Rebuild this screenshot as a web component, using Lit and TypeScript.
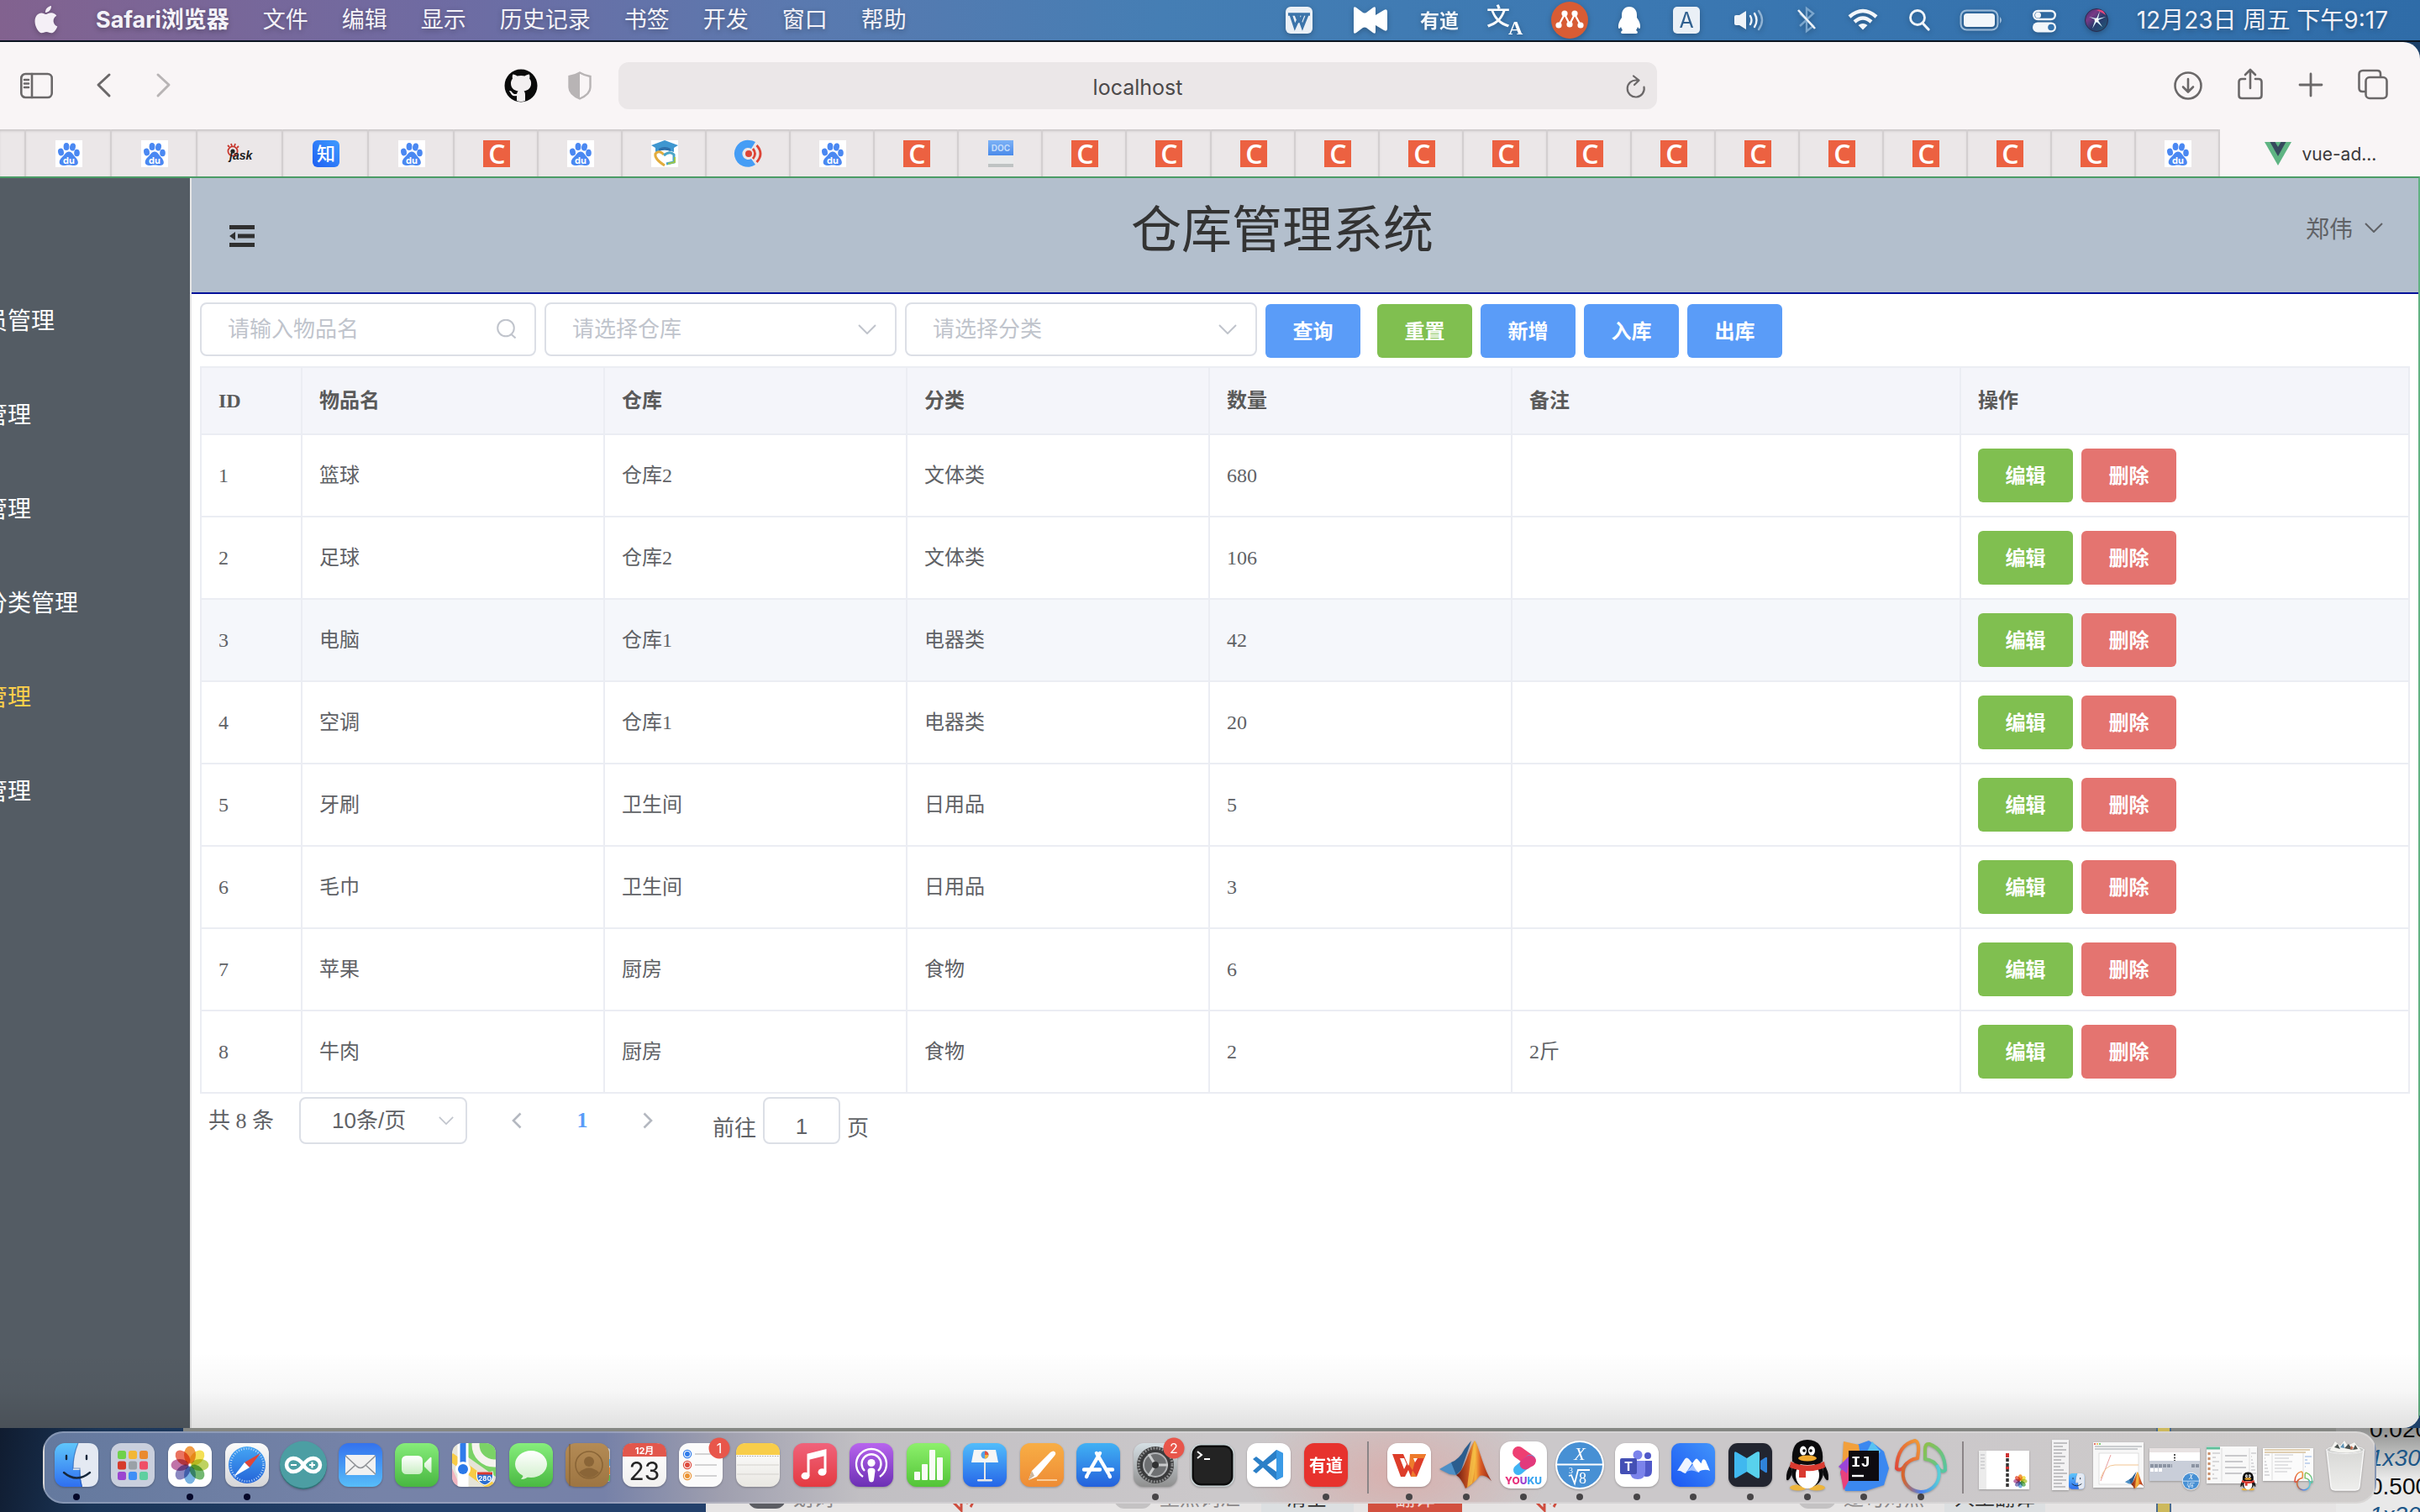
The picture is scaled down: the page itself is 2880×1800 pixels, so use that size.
import { LitElement, html, svg, css } from "lit";
import { customElement } from "lit/decorators.js";
import { classMap } from "lit/directives/class-map.js";

/* ------------------------------------------------------------------ */
/* Menu bar                                                            */
/* ------------------------------------------------------------------ */

const menus = ["文件", "编辑", "显示", "历史记录", "书签", "开发", "窗口", "帮助"];

/** Menu bar extras: [width, drawing], each drawn on a canvas 48 high. */
const extras: [number, unknown][] = [
  [48, svg`<rect x="8" y="8" width="32" height="32" rx="6" fill="#eaf0f6"/>
    <path d="M11 17h14M24 17h13M14 17l5 15 5-11 4 11 6-15M20 17l4 10M29 17l-3 8" fill="none" stroke="#3b74aa" stroke-width="3.4"/>`],
  [52, svg`<path d="M7 10q0-3 3-1l8 6q2 1 4 0l8-6q3-2 3 1v10l10-5q3-1 3 2v14q0 3-3 2l-10-5v10q0 3-3 1l-8-6q-2-1-4 0l-8 6q-3 2-3-1z" fill="#fff"/><path d="M33 18l10-6q4-2 4 2v20q0 4-4 2l-10-6z" fill="#fff"/>`],
  [47, svg`<text x="23" y="33" text-anchor="middle" font-size="23" font-weight="700" fill="#f2f6fa">有道</text>`],
  [41, svg`<text x="-2" y="30" font-size="28" font-weight="500" fill="#fff">文</text>
    <text x="24" y="41" font-size="24" font-weight="700" class="serif" fill="#fff">A</text>`],
  [44, svg`<circle cx="22" cy="24" r="22" fill="#d85c34"/>
    <path d="M9 30l7-13 6 12 6-12 7 13" fill="none" stroke="#fff" stroke-width="2.2"/>
    <g fill="#fff"><circle cx="9" cy="30" r="3.6"/><circle cx="16" cy="16" r="3.6"/><circle cx="22" cy="29" r="3.6"/><circle cx="28" cy="16" r="3.6"/><circle cx="35" cy="30" r="3.6"/></g>`],
  [30, svg`<path d="M15 8c-6 0-9 4.500-9 10v3c-3 4-4.500 8-4 12 .6 2 2 1 3-1 .6 2 1.500 3 2 4-2 1-3 4 0 4h16c3 0 2-3 0-4 .6-1 1.500-2 2-4 1 2 2.400 3 3 1 .5-4-1-8-4-12v-3c0-5.500-3-10-9-10z" fill="#fff"/>`],
  [39, svg`<rect x="3" y="8" width="32" height="32" rx="5" fill="#eaf0f6"/>
    <text x="19" y="33" text-anchor="middle" font-size="25" fill="#30608f">A</text>`],
  [41, svg`<path d="M3 20q0-2 2-2h4l8-5v22l-8-5H5q-2 0-2-2z" fill="#eef3f8"/>
    <g fill="none" stroke-width="2.400" stroke-linecap="round"><path d="M22 19q3 5 0 10" stroke="#eef3f8"/><path d="M27 16q5 8 0 16" stroke="#eef3f8"/><path d="M32 13q8 11 0 22" stroke="#8fb2d3"/></g>`],
  [28, svg`<path d="M6 16l16 15-8 6V10l8 6L6 31" fill="none" stroke="#7ba6cd" stroke-width="2.400"/>
    <path d="M4 12l20 22" stroke="#eef3f8" stroke-width="2.600"/>`],
  [38, svg`<g fill="none" stroke="#f2f6fa" stroke-width="4.400"><path d="M3 20q16-14 32 0"/><path d="M9 26q10-9 20 0"/></g>
    <path d="M13.500 30q5.500-4 11 0l-5.500 5.500z" fill="#f2f6fa"/>`],
  [28, svg`<circle cx="12" cy="21" r="8.500" fill="none" stroke="#f2f6fa" stroke-width="2.800"/><path d="M18 27.500l7 7.500" stroke="#f2f6fa" stroke-width="3.200" stroke-linecap="round"/>`],
  [53, svg`<rect x="1.500" y="12.500" width="44" height="23" rx="7" fill="none" stroke="#9dbcd9" stroke-width="2"/>
    <rect x="5" y="16" width="37" height="16" rx="4" fill="#f2f6fa"/><path d="M48 20q4 4 0 8z" fill="#9dbcd9"/>`],
  [28, svg`<rect x="1.200" y="13" width="25.600" height="10" rx="5" fill="none" stroke="#f2f6fa" stroke-width="2.400"/><circle cx="6.500" cy="18" r="3.500" fill="#f2f6fa"/>
    <rect x="0" y="26.500" width="28" height="12" rx="6" fill="#f2f6fa"/><circle cx="22" cy="32.500" r="3.800" fill="#3573ad"/>`],
  [28, svg`<defs><linearGradient id="siri" x1="0" y1="0" x2="1" y2="1"><stop offset="0" stop-color="#3a2a6b"/><stop offset=".3" stop-color="#7a3a86"/><stop offset=".55" stop-color="#2a3a6d"/><stop offset="1" stop-color="#1d5f78"/></linearGradient></defs>
    <circle cx="14" cy="24" r="13.500" fill="url(#siri)" stroke="#2a2b4c"/><path d="M14 24l-9-4 9 2 4-9-2 9 9-2-9 4 5 8-7-6-5 8 3-9z" fill="#d9f6fb"/><circle cx="14" cy="24" r="2.400" fill="#fff"/><path d="M14 12q8-2 11 6-6-4-11-6z" fill="#e0487e"/>`],
];

@customElement("menu-bar")
export class MenuBar extends LitElement {
  static styles = css`
    :host {
      display: flex;
      align-items: center;
      justify-content: space-between;
      height: 48px;
      padding: 0 38px 0 36px;
      border-bottom: 2px solid #0b1420;
      background: linear-gradient(90deg, #82628f 0%, #6f6ba2 18%, #5a79af 33%, #457eb4 48%, #3b78b2 68%, #2f6ca8 100%);
      color: #fff;
      font-family: Inter, "Noto Sans CJK SC", sans-serif;
      font-size: 27px;
    }
    .left, .right { display: flex; align-items: center; }
    .left { gap: 40px; }
    .right { gap: 34px; }
    button {
      margin: 0;
      padding: 0;
      border: 0;
      background: none;
      color: #f4f2f8;
      font: inherit;
      line-height: 46px;
      text-shadow: 0 2px 6px rgba(0, 0, 0, 0.3);
    }
    .app { font-weight: 700; }
    .apple { display: flex; }
    svg { display: block; overflow: visible; filter: drop-shadow(0 2px 3px rgba(0, 0, 0, 0.25)); }
    .serif { font-family: "Liberation Serif", serif; }
    .clock { font-size: 28px; }
  `;
  render() {
    return html`
      <nav class="left" aria-label="菜单">
        <button class="apple" aria-label="Apple">
          <svg width="38" height="46" viewBox="0 0 38 46">
            <path fill="#f4eff6" d="M25 6c.3 4-3 8-7 8-.4-4 3-7.500 7-8zM18.500 16c1.700 0 3.500-1.700 6.500-1.700 2.500 0 5 1.400 6.300 3.500-5.500 3-4.600 10.500 1 12.700-1.500 4-4.300 7.800-7.300 7.800-2.300 0-3-1.300-5.700-1.300s-3.600 1.300-5.700 1.300C10 38.300 5.500 30.500 5.500 24.500c0-6.500 4-10 7.800-10 2.400 0 3.900 1.500 5.200 1.500z"/>
          </svg>
        </button>
        <button class="app">Safari浏览器</button>
        ${menus.map((m) => html`<button>${m}</button>`)}
      </nav>
      <div class="right">
        ${extras.map(([w, art]) => html`<svg width=${w} height="48" viewBox="0 0 ${w} 48" aria-hidden="true">${art}</svg>`)}
        <button class="clock">12月23日 周五 下午9:17</button>
      </div>
    `;
  }
}

/* ------------------------------------------------------------------ */
/* Browser toolbar and tabs                                            */
/* ------------------------------------------------------------------ */

const favicons: Record<string, unknown> = {
  baidu: svg`<rect width="32" height="32" fill="#fff"/>
    <g fill="#4a88f2"><ellipse cx="6.500" cy="14" rx="3.400" ry="4.400" transform="rotate(-12 6.500 14)"/><ellipse cx="13" cy="7.500" rx="3.400" ry="4.600"/><ellipse cx="20.500" cy="8" rx="3.400" ry="4.600" transform="rotate(12 20.500 8)"/><ellipse cx="25.500" cy="15" rx="3.300" ry="4.300"/>
    <path d="M16 13.500c4 0 5 4 8 7s5 9-1 9.500c-3 .3-4-.6-7-.6s-4 .9-7 .6c-6-.5-5-6.500-1.500-9.500s4.500-7 8.500-7z"/></g>
    <text x="16" y="27.500" text-anchor="middle" font-size="11" font-weight="700" fill="#fff">du</text>`,
  c: svg`<rect width="32" height="32" fill="#ec6141"/><text x="16.500" y="27.500" text-anchor="middle" font-size="32" font-weight="600" class="round" fill="#fff">C</text>`,
  ask: svg`<g fill="none" stroke="#c8392f" stroke-width="1.800"><circle cx="7" cy="13" r="5.600"/><path d="M3 8L1 6M6 7L5 4M9 7l1-3M12 9l2-2"/></g><circle cx="7" cy="13" r="2.600" fill="#222"/>
    <text x="3" y="23" font-size="14" font-weight="700" font-style="italic" fill="#1d1d1d" class="cond">jask</text>`,
  zhi: svg`<defs><linearGradient id="zhi" x1="1" y1="0" x2="0" y2="1"><stop offset="0" stop-color="#3f9bff"/><stop offset="1" stop-color="#1f5ff2"/></linearGradient></defs>
    <rect width="32" height="32" rx="6" fill="url(#zhi)"/><text x="16" y="24" text-anchor="middle" font-size="22" font-weight="500" fill="#fff">知</text>`,
  grad: svg`<rect width="32" height="32" fill="#fff"/><path d="M16 0l16 6-5 3v5q-11-5-22 0V9L0 6z" fill="#3f97d0"/><path d="M9 10q7-4 14 0v3q-7-3-14 0z" fill="#2d6faa"/>
    <path d="M16 30C8 25 4 20 5 16q4-5 10 1" fill="none" stroke="#e3ac3d" stroke-width="3"/><path d="M15 18q7-6 12-1v9l-9 2" fill="none" stroke="#4aa5c8" stroke-width="3"/><path d="M20 28l8-2v-6" fill="none" stroke="#9cc74b" stroke-width="2"/>`,
  radio: svg`<path d="M17 0a16 16 0 1 0 7 29l-5-7a7 7 0 1 1 0-12l5-8a16 16 0 0 0-7-2z" fill="#459df5"/><circle cx="16" cy="16" r="4" fill="#dd4436"/>
    <g fill="none" stroke="#dd4436" stroke-width="2.800"><path d="M21 10q5 6 0 12"/><path d="M25.500 6q9 10 0 20"/></g>`,
  doc: svg`<defs><linearGradient id="doc" x1="0" y1="0" x2="0" y2="1"><stop offset="0" stop-color="#7db2f6"/><stop offset="1" stop-color="#4a8bea"/></linearGradient></defs>
    <rect x="1" width="30" height="32" fill="#e9eaea"/><rect x="1" y="28" width="30" height="4" fill="#bfc3c3"/><rect x="1" width="30" height="18" fill="url(#doc)"/>
    <text x="16" y="13" text-anchor="middle" font-size="10" font-weight="700" fill="#c3dcfa">DOC</text>`,
  vue: svg`<path d="M0 2h32L16 30z" fill="#5fb483"/><path d="M6.500 2h19L16 19z" fill="#36495d"/><path d="M12.500 2h7L16 8z" fill="#5fb483"/>`,
};

const tabs = [
  "baidu", "baidu", "ask", "zhi", "baidu", "c", "baidu", "grad", "radio", "baidu", "c", "doc",
  ...Array(13).fill("c"), "baidu",
];

@customElement("browser-chrome")
export class BrowserChrome extends LitElement {
  static styles = css`
    :host {
      display: block;
      background: #f9f5f6;
      font-family: Inter, "Noto Sans CJK SC", sans-serif;
    }
    .toolbar {
      display: flex;
      align-items: center;
      height: 104px;
      padding: 0 38px 0 24px;
    }
    .start { flex: 712 1 0; min-width: 0; display: flex; align-items: center; }
    .end { flex: 870 1 0; min-width: 0; display: flex; align-items: center; justify-content: flex-end; gap: 40px; }
    .nav { display: flex; align-items: center; flex: 1; gap: 52px; }
    .extensions { display: flex; align-items: center; gap: 36px; margin-right: 32px; }
    .address {
      flex: 1236 1 0;
      min-width: 0;
      display: flex;
      align-items: center;
      height: 56px;
      border-radius: 12px;
      background: #ebe7e8;
    }
    input {
      flex: 1;
      min-width: 0;
      border: 0;
      padding: 4px 0 0 38px;
      background: none;
      color: #4b494a;
      font: 25px Inter, sans-serif;
      text-align: center;
      outline: 0;
    }
    button { display: flex; padding: 0; border: 0; background: none; color: #6b6869; }
    .address button { margin-right: 12px; }
    .faded { color: #b8b4b5; }
    svg { display: block; overflow: visible; }
    .tabs {
      display: grid;
      grid-template-columns: 31fr repeat(5, 102fr) repeat(21, 100fr) 238fr;
      height: 56px;
    }
    .tab {
      display: flex;
      align-items: center;
      justify-content: center;
      min-width: 0;
      border-right: 2px solid #d3cfd0;
      background: #ebe7e8;
      box-shadow: inset 0 3px 3px -1px #c9c5c6;
      padding: 2px 0 0 2px;
    }
    .current {
      border: 0;
      gap: 12px;
      background: none;
      box-shadow: none;
      color: #3b393a;
      font-size: 21px;
    }
    .round { font-family: "Open Sans", sans-serif; }
    .cond { font-family: "Liberation Sans", sans-serif; }
  `;
  render() {
    return html`
      <div class="toolbar">
        <div class="start">
          <div class="nav">
            <button aria-label="边栏">
              <svg width="39" height="32" viewBox="0 0 39 32" fill="none" stroke="currentColor" stroke-width="2.600">
                <rect x="1.300" y="2" width="36.400" height="28" rx="5"/><path d="M14 2v28M5 9h5M5 13.500h5M5 18h5" stroke-linecap="round"/>
              </svg>
            </button>
            <button aria-label="后退">
              <svg width="18" height="30" viewBox="0 0 18 30" fill="none" stroke="currentColor" stroke-width="3"><path d="M15 2L2 14l13 13" stroke-linecap="round" stroke-linejoin="round"/></svg>
            </button>
            <button class="faded" aria-label="前进">
              <svg width="18" height="30" viewBox="0 0 18 30" fill="none" stroke="currentColor" stroke-width="3"><path d="M3 2l13 12L3 27" stroke-linecap="round" stroke-linejoin="round"/></svg>
            </button>
          </div>
          <div class="extensions">
            <button aria-label="GitHub">
              <svg width="40" height="40" viewBox="0 0 40 40">
                <circle cx="20" cy="20" r="19.500" fill="#0a0a0a"/>
                <path fill="#f2eff0" d="M15 38v-6c-5 1.200-6.500-1.500-7.500-3.500-.7-1.200-2-2-1-2.400 2.200-.4 3.400 3.400 5.500 3.800 1.300.3 2.500 0 3.200-.5.2-1.300.8-2.200 1.500-2.800-6-1-8.700-4.200-8.700-9.500 0-2.300.8-4.200 2-5.600-.5-1.800-.3-3.800.4-5 2 0 3.800 1 5 2 3-.8 6.400-.8 9.200 0 1.400-1 3.200-2 5.200-2 .7 1.300.9 3.200.3 5 1.300 1.500 2 3.300 2 5.600 0 5.300-2.800 8.500-8.600 9.500 1 .8 1.500 2.500 1.500 4.500v7q-5 1.800-10 0z"/>
              </svg>
            </button>
            <button class="faded" aria-label="隐私">
              <svg width="28" height="34" viewBox="0 0 28 34"><path d="M14 1.500Q20 5 26.500 6v13q0 8-12.500 13.500Q1.500 27 1.500 19V6Q8 5 14 1.500z" fill="none" stroke="currentColor" stroke-width="2.400"/><path d="M14 1.500v31Q1.500 27 1.500 19V6Q8 5 14 1.500z" fill="currentColor"/></svg>
            </button>
          </div>
        </div>
        <div class="address">
          <input type="text" aria-label="地址" .value=${"localhost"} />
          <button aria-label="重新载入">
            <svg width="26" height="30" viewBox="0 0 26 30" fill="none" stroke="currentColor" stroke-width="2.200" stroke-linecap="round" stroke-linejoin="round"><path d="M22.500 16.500A10 10 0 1 1 14 8.600M10 3.500l6.500 5.200L11 14"/></svg>
          </button>
        </div>
        <div class="end">
          <button aria-label="下载">
            <svg width="36" height="40" viewBox="0 0 36 40" fill="none" stroke="currentColor" stroke-width="2.600" stroke-linecap="round" stroke-linejoin="round"><circle cx="18" cy="20" r="15.500"/><path d="M18 12v15M12 21.500l6 6 6-6"/></svg>
          </button>
          <button aria-label="共享">
            <svg width="32" height="40" viewBox="0 0 32 40" fill="none" stroke="currentColor" stroke-width="2.600" stroke-linecap="round" stroke-linejoin="round"><path d="M10 12H6q-3.500 0-3.500 3.500v16Q2.500 35 6 35h20q3.500 0 3.500-3.500v-16Q29.500 12 26 12h-4M16 23V1M10 7l6-6 6 6"/></svg>
          </button>
          <button aria-label="新标签页">
            <svg width="32" height="40" viewBox="0 0 32 40" fill="none" stroke="currentColor" stroke-width="2.800" stroke-linecap="round"><path d="M16 6v26M3 19h26"/></svg>
          </button>
          <button aria-label="标签页概览">
            <svg width="36" height="40" viewBox="0 0 36 40" fill="none" stroke="currentColor" stroke-width="2.600" stroke-linejoin="round"><rect x="9.500" y="10" width="25" height="25" rx="4.500"/><path d="M9.500 27H5.500Q1.500 27 1.500 23V6.500q0-4.500 4.500-4.500H23q4 0 4 4v4"/></svg>
          </button>
        </div>
      </div>
      <div class="tabs">
        <div class="tab"></div>
        ${tabs.map((t) => html`<div class="tab"><svg width="32" height="32" viewBox="0 0 32 32">${favicons[t]}</svg></div>`)}
        <div class="tab current"><svg width="32" height="32" viewBox="0 0 32 32">${favicons.vue}</svg><span>vue-ad...</span></div>
      </div>
    `;
  }
}

/* ------------------------------------------------------------------ */
/* Warehouse page                                                      */
/* ------------------------------------------------------------------ */

const sections = [
  { label: "员管理" },
  { label: "管理" },
  { label: "管理" },
  { label: "分类管理" },
  { label: "管理", active: true },
  { label: "管理" },
];

const columns = ["ID", "物品名", "仓库", "分类", "数量", "备注", "操作"];

const goods = [
  [1, "篮球", "仓库2", "文体类", 680, ""],
  [2, "足球", "仓库2", "文体类", 106, ""],
  [3, "电脑", "仓库1", "电器类", 42, ""],
  [4, "空调", "仓库1", "电器类", 20, ""],
  [5, "牙刷", "卫生间", "日用品", 5, ""],
  [6, "毛巾", "卫生间", "日用品", 3, ""],
  [7, "苹果", "厨房", "食物", 6, ""],
  [8, "牛肉", "厨房", "食物", 2, "2斤"],
];
const hoveredId = 3;

const chevron = (w: number, h: number) => html`
  <svg class="mark" width=${w} height=${h} viewBox="0 0 22 12" fill="none" stroke="currentColor" stroke-width="2" aria-hidden="true"><path d="M1 1l10 10L21 1"/></svg>`;

@customElement("warehouse-page")
export class WarehousePage extends LitElement {
  static styles = css`
    :host {
      display: flex;
      border-top: 2px solid #4b9c66;
      border-right: 2px solid #62b283;
      background: #fff;
      color: #606266;
      font-family: "Liberation Serif", "Noto Sans CJK SC", serif;
      font-size: 24px;
    }
    button, input, select { margin: 0; box-sizing: border-box; }
    aside {
      flex: none;
      width: 226px;
      box-sizing: content-box;
      overflow: hidden;
      border-right: 2px solid #e6e6e6;
      background: #545c64;
      padding-top: 115px;
    }
    aside ul { margin: 0 0 0 -19px; padding: 0; list-style: none; }
    aside a {
      display: block;
      color: #fff;
      font-size: 28px;
      line-height: 112px;
      text-decoration: none;
      white-space: nowrap;
    }
    aside a.active { color: #ffd04b; }
    .content { flex: 1; min-width: 0; }
    header {
      display: flex;
      align-items: center;
      height: 136px;
      padding: 0 42px 0 40px;
      border-bottom: 2px solid #00109a;
      background: #b3bfcd;
    }
    header h1 {
      flex: 1;
      margin: 0;
      padding-bottom: 10px;
      color: #333;
      font-size: 60px;
      font-weight: 400;
      line-height: 80px;
      text-align: center;
    }
    .fold, .user { display: flex; align-items: center; padding: 0; border: 0; background: none; }
    .fold { width: 40px; padding-top: 2px; color: #303030; justify-content: center; }
    .user { gap: 14px; padding-bottom: 19px; color: #606266; font: inherit; font-size: 28px; }
    main { padding: 10px; }
    .filters { display: flex; gap: 10px; height: 66px; margin-bottom: 10px; align-items: flex-start; }
    .field { display: grid; align-items: center; width: 419px; height: 64px; color: #c0c4cc; }
    .field.keyword { width: 400px; }
    .field > * { grid-area: 1 / 1; }
    .field .mark { justify-self: end; margin-right: 24px; pointer-events: none; }
    .control {
      appearance: none;
      width: 100%;
      height: 100%;
      border: 2px solid #dcdfe6;
      border-radius: 8px;
      background: #fff;
      padding: 0 48px 0 31px;
      color: #c0c4cc;
      font: 26px "Liberation Sans", "Noto Sans CJK SC", sans-serif;
      outline: 0;
    }
    .control::placeholder { color: #c0c4cc; opacity: 1; }
    .btn {
      width: 113px;
      height: 64px;
      border: 0;
      border-radius: 6px;
      padding: 0 0 4px;
      background: #5a9cf8;
      color: #fff;
      font: 700 24px "Liberation Sans", "Noto Sans CJK SC", sans-serif;
    }
    .filters .btn { align-self: flex-end; }
    .btn.green { background: #80bf50; }
    .btn.red { background: #e47470; }
    .search { margin-right: 10px; }
    table {
      width: 100%;
      table-layout: fixed;
      border-collapse: separate;
      border-spacing: 0;
      border: solid #ebedf3;
      border-width: 2px 0 0 2px;
    }
    .c-id { width: 120px; }
    .c-mid { width: 360px; }
    th, td {
      box-sizing: border-box;
      height: 98px;
      padding: 0 20px;
      border: solid #ebedf3;
      border-width: 0 2px 2px 0;
      text-align: left;
      line-height: 32px;
    }
    th { height: 80px; background: #f4f5fa; color: #5a5a5a; font-weight: 700; }
    tr.hover td { background: #f5f7fb; }
    .ops { display: flex; gap: 10px; }
    .pager {
      display: flex;
      align-items: flex-start;
      margin-top: 4px;
      padding: 0 10px;
      font-size: 26px;
      line-height: 58px;
    }
    .field.size { width: 200px; height: 56px; margin: 0 20px 0 30px; }
    .size .control { padding: 0 36px 0 37px; color: #606266; }
    .size .mark { margin-right: 16px; }
    .page {
      display: flex;
      align-items: center;
      justify-content: center;
      width: 78px;
      height: 56px;
      border: 0;
      padding: 0;
      background: none;
      color: #b4b8c0;
      font: inherit;
    }
    .page.current { color: #5a9cf8; font-weight: 700; }
    .jump { display: flex; gap: 8px; margin-left: 38px; line-height: 40px; }
    .jump span { padding-top: 18px; }
    .jump .control { width: 92px; height: 56px; padding: 14px 0 0; color: #606266; text-align: center; }
  `;
  render() {
    return html`
      <aside>
        <ul>
          ${sections.map((s) => html`<li><a href="#" class=${classMap({ active: !!s.active })}>${s.label}</a></li>`)}
        </ul>
      </aside>
      <div class="content">
        <header>
          <button class="fold" aria-label="折叠">
            <svg width="30" height="26" viewBox="0 0 30 26" fill="currentColor"><path d="M0 0h30v5H0zM10 10.500h20v5H10zM0 21h30v5H0zM0 13l7-5v10z"/></svg>
          </button>
          <h1>仓库管理系统</h1>
          <button class="user"><span>郑伟</span>${chevron(22, 12)}</button>
        </header>
        <main>
          <form class="filters" @submit=${(e: Event) => e.preventDefault()}>
            <label class="field keyword">
              <input class="control" type="text" placeholder="请输入物品名" aria-label="物品名" />
              <svg class="mark" width="24" height="24" viewBox="0 0 24 24" fill="none" stroke="currentColor" stroke-width="2" aria-hidden="true"><circle cx="12" cy="10.500" r="9.800"/><path d="M18.500 18l5 4.500"/></svg>
            </label>
            <label class="field"><select class="control" aria-label="仓库"><option>请选择仓库</option></select>${chevron(22, 12)}</label>
            <label class="field"><select class="control" aria-label="分类"><option>请选择分类</option></select>${chevron(22, 12)}</label>
            <button class="btn search">查询</button>
            <button class="btn green" type="reset">重置</button>
            <button class="btn" type="button">新增</button>
            <button class="btn" type="button">入库</button>
            <button class="btn" type="button">出库</button>
          </form>
          <table>
            <colgroup>
              <col class="c-id" /><col class="c-mid" /><col class="c-mid" /><col class="c-mid" /><col class="c-mid" /><col /><col />
            </colgroup>
            <thead><tr>${columns.map((c) => html`<th scope="col">${c}</th>`)}</tr></thead>
            <tbody>
              ${goods.map((row) => html`
                <tr class=${classMap({ hover: row[0] === hoveredId })}>
                  ${row.map((v) => html`<td>${v}</td>`)}
                  <td><div class="ops"><button class="btn green">编辑</button><button class="btn red">删除</button></div></td>
                </tr>`)}
            </tbody>
          </table>
          <div class="pager">
            <span>共 8 条</span>
            <label class="field size"><select class="control" aria-label="每页条数"><option>10条/页</option></select>${chevron(18, 10)}</label>
            <button class="page" aria-label="上一页"><svg width="12" height="20" viewBox="0 0 12 20" fill="none" stroke="currentColor" stroke-width="2.600"><path d="M10.500 1.500L2 10l8.500 8.500"/></svg></button>
            <button class="page current">1</button>
            <button class="page" aria-label="下一页"><svg width="12" height="20" viewBox="0 0 12 20" fill="none" stroke="currentColor" stroke-width="2.600"><path d="M1.500 1.500L10 10l-8.500 8.500"/></svg></button>
            <label class="jump"><span>前往</span><input class="control" type="text" .value=${"1"} /><span>页</span></label>
          </div>
        </main>
      </div>
    `;
  }
}

/* ------------------------------------------------------------------ */
/* Dock                                                                */
/* ------------------------------------------------------------------ */

const grad = (id: string, top: string, bottom: string) =>
  svg`<defs><linearGradient id=${id} x1="0" y1="0" x2="0" y2="1"><stop offset="0" stop-color=${top}/><stop offset="1" stop-color=${bottom}/></linearGradient></defs>`;
const tile = (id: string, top: string, bottom: string) =>
  svg`${grad(id, top, bottom)}<rect width="52" height="52" rx="12" fill="url(#${id})"/>`;

const petals = ["#ef8e2c", "#f3dc3e", "#b5cc4a", "#5fae5e", "#65a8de", "#7a78b8", "#b85f9c", "#e8604a"];

const finder = svg`
  ${tile("finder", "#5fc6fb", "#2f6ff0")}
  <path d="M28 0h12q12 0 12 12v28q0 12-12 12h-7q-3-10-2.500-20H22Q22 14 28 0z" fill="#e4e9f2"/>
  <path d="M28 0Q22 14 22 30h8q-.5 12 2.500 22" fill="none" stroke="#1d4f9a" stroke-width="1.200" opacity=".55"/>
  <path d="M14 15v4M38 15v4" stroke="#16283c" stroke-width="2.400" stroke-linecap="round"/>
  <path d="M11 35q15 13 31 0" fill="none" stroke="#16283c" stroke-width="2.400" stroke-linecap="round"/>`;

const photos = svg`
  <rect width="52" height="52" rx="12" fill="#fff"/>
  ${petals.map((c, i) => svg`<ellipse cx="26" cy="14" rx="7" ry="10.500" fill=${c} opacity=".88" transform="rotate(${i * 45} 26 26)" style="mix-blend-mode:multiply"/>`)}`;

const matlab = svg`
  <defs><linearGradient id="matlab" x1="0" y1="0" x2="1" y2="0"><stop offset="0" stop-color="#6d1a12"/><stop offset=".35" stop-color="#c8541f"/><stop offset=".55" stop-color="#f6b23c"/><stop offset=".7" stop-color="#d95a24"/><stop offset="1" stop-color="#8f2415"/></linearGradient></defs>
  <path d="M-6 31l14-8q6-1 10-5l-4 20-8-1z" fill="#4d8fc6"/><path d="M8 23q10-4 16-16l8-10L20 32l-6 6z" fill="#2b5d8e"/>
  <path d="M36-3c5 6 9 30 20 48q-8-8-14-6-8 10-17 15-5-12-11-16c10-4 15-32 22-41z" fill="url(#matlab)"/><path d="M36-3c-3 12-6 30-9 56l6-5q6-28 3-51z" fill="#f7c64a" opacity=".75"/>`;

const mathtype = svg`
  <circle cx="26" cy="26" r="29" fill="#fff"/><circle cx="26" cy="26" r="27" fill="#4790d4"/><path d="M-1 25.500h54" stroke="#fff" stroke-width="2"/>
  <text x="26" y="20" text-anchor="middle" class="serif" font-size="22" font-style="italic" fill="#fff">X</text>
  <path d="M13 39l3-1 4 10 4-16h14" fill="none" stroke="#fff" stroke-width="1.800"/><text x="25" y="48" class="serif" font-size="18" fill="#fff">8</text><text x="13" y="36" class="serif" font-size="10" fill="#fff">3</text>`;

const qq = svg`
  <ellipse cx="15" cy="53" rx="10" ry="3.500" fill="#eeb53c"/><ellipse cx="37" cy="53" rx="10" ry="3.500" fill="#eeb53c"/>
  <path d="M7 24Q0 34 1 43q1 3 4-1l2-4M45 24q7 10 6 19-1 3-4-1l-2-4" fill="#0b0b0d"/>
  <ellipse cx="26" cy="34" rx="19" ry="19" fill="#0b0b0d"/><ellipse cx="26" cy="38" rx="14" ry="16" fill="#fff"/>
  <path d="M8 22Q6-4 26-4t18 26q-18 8-36 0z" fill="#0b0b0d"/>
  <ellipse cx="21" cy="9" rx="4" ry="5.500" fill="#fff"/><ellipse cx="31" cy="9" rx="4" ry="5.500" fill="#fff"/><circle cx="22" cy="9" r="1.800"/><circle cx="30" cy="9" r="1.800"/>
  <ellipse cx="26" cy="18" rx="11" ry="3.500" fill="#f0a92e"/>
  <path d="M6 22q20 9 40 0l1 7q-11 5-23 4v8h-8v-9q-6-1-11-3z" fill="#d93a30"/>`;

const navicat = svg`<defs>
    <linearGradient id="navA" x1="0" y1="1" x2="1" y2="0"><stop offset="0" stop-color="#e0463a"/><stop offset="1" stop-color="#ef9a35"/></linearGradient>
    <linearGradient id="navB" x1="0" y1="0" x2="1" y2="1"><stop offset="0" stop-color="#8dc04a"/><stop offset="1" stop-color="#55c6a4"/></linearGradient>
    <linearGradient id="navC" x1="0" y1="0" x2="1" y2="0"><stop offset="0" stop-color="#d8652b"/><stop offset=".5" stop-color="#4a7ff0"/><stop offset="1" stop-color="#57cfd8"/></linearGradient></defs>
  <g fill="none" stroke-width="4" stroke-linejoin="round"><path d="M-3 30Q-2 2 19-3q5 1 4 13l-1 8Q12 19 6 28q-5 6-9 2z" stroke="url(#navA)"/><path d="M55 32Q55 8 36 1q-5-1-5 7v11Q42 20 47 30q5 6 8 2z" stroke="url(#navB)"/>
  <path d="M8 25a21.500 21.500 0 1 0 37 1" stroke="url(#navC)"/></g>`;

type App = { art: unknown; running?: boolean; badge?: string };

const apps: App[] = [
  { art: finder, running: true },
  { art: svg`<rect width="52" height="52" rx="12" fill="#c9cfdd"/>
      ${["#6fd14b", "#f2b735", "#ea8a2f", "#d63a2b", "#9aa1a7", "#ef4e66", "#9a45d0", "#3f8ef6", "#5ecfa0"].map((c, i) => svg`<rect x=${8 + (i % 3) * 13} y=${9 + Math.floor(i / 3) * 12.5} width="10" height="10" rx="2.500" fill=${c}/>`)}` },
  { art: photos, running: true },
  { art: svg`${tile("safari", "#fbfbfb", "#d6d6d8")}${grad("safariIn", "#45a6f4", "#2464d8")}<circle cx="26" cy="26" r="22" fill="url(#safariIn)"/>
      <circle cx="26" cy="26" r="19.500" fill="none" stroke="#bcd9f8" stroke-width="2.400" stroke-dasharray="1 2"/><path d="M42 12L29 29l-6-6z" fill="#e0463a"/><path d="M10 40l13-17 6 6z" fill="#fff"/>`, running: true },
  { art: svg`<circle cx="26" cy="27" r="28" fill="#2f7478"/><circle cx="26" cy="25.500" r="28" fill="#4c9ea3"/>
      <g fill="none" stroke="#fff" stroke-width="4.500"><path d="M26 26c-5-8-10-8-12-8a8 8 0 0 0 0 16c2 0 7 0 12-8s10-8 12-8a8 8 0 0 1 0 16c-2 0-7 0-12-8z"/></g><path d="M11 26h7M33 26h7M36.500 22.500v7" stroke="#fff" stroke-width="2.200"/>` },
  { art: svg`${tile("mail", "#3472ee", "#57bdf9")}<rect x="8" y="14" width="36" height="24" rx="2.500" fill="#f1f1f1"/><path d="M8 15l14 13q4 3 8 0l14-13M8 37l12-11M44 37L32 26" fill="none" stroke="#8f9296" stroke-width="1.600"/>` },
  { art: svg`${tile("ft", "#86ec7a", "#48b740")}${grad("ftIn", "#ffffff", "#c9eec3")}<rect x="8" y="15" width="25" height="22" rx="5.500" fill="url(#ftIn)"/><path d="M35 24l7-7q1.500-1 1.500 1v16q0 2-1.500 1l-7-7z" fill="url(#ftIn)"/>` },
  { art: svg`<defs><clipPath id="mapClip"><rect width="52" height="52" rx="12"/></clipPath></defs><g clip-path="url(#mapClip)"><rect width="52" height="52" fill="#e6e4d8"/>
      <path d="M18 0h34v40L18 16z" fill="#7bd267"/><circle cx="50" cy="2" r="22" fill="none" stroke="#f5f3ee" stroke-width="9"/><path d="M-2 16L50 54" stroke="#f7cb45" stroke-width="10"/><path d="M0 30l10 22H0z" fill="#f0b3c0"/>
      <path d="M13 0v52" stroke="#fff" stroke-width="13"/><path d="M13 0v30" stroke="#2f7bea" stroke-width="7"/><circle cx="13" cy="31" r="9" fill="#fff"/><circle cx="13" cy="31" r="6" fill="#2a78e8"/>
      <path d="M30 34q9 3 18 0 3 12-9 16-12-4-9-16z" fill="#2b6fd0" stroke="#fff" stroke-width="1.200"/><path d="M30 36h18" stroke="#d8392e" stroke-width="3"/></g><text x="39" y="45" text-anchor="middle" font-size="8" font-weight="700" fill="#fff">280</text>` },
  { art: svg`${tile("msg", "#86ee7c", "#4ab942")}${grad("msgIn", "#ffffff", "#d5f1d0")}<ellipse cx="26" cy="25" rx="19" ry="16" fill="url(#msgIn)"/><path d="M17 36q0 4-3 7 7 0 10-5z" fill="#dcf3d8"/>` },
  { art: svg`<rect x="44" y="6" width="9" height="40" rx="3" fill="#c8c8c8"/><path d="M50 19h3v8h-3z" fill="#4aa9e8"/><path d="M50 29h3v8h-3z" fill="#ee8c31"/><path d="M50 38h3v7h-3z" fill="#55c050"/>${tile("book", "#b48b55", "#9d7542")}
      <path d="M5 1v50" stroke="#886333" stroke-width="1.400"/><circle cx="28" cy="26" r="16" fill="none" stroke="#8a6537" stroke-width="1.600"/><circle cx="28" cy="22" r="6" fill="#8a6537"/><path d="M16 35q12-11 24 0-12 12-24 0z" fill="#8a6537"/>` },
  { art: svg`${tile("cal", "#ffffff", "#f1f0ef")}<path d="M0 16v-4Q0 0 12 0h28q12 0 12 12v4z" fill="#e2574c"/><text x="26" y="13" text-anchor="middle" font-size="11" font-weight="700" fill="#fff">12月</text><text x="26" y="44" text-anchor="middle" font-size="30" fill="#252525">23</text>` },
  { art: svg`<rect width="52" height="52" rx="12" fill="#fbfbfb"/><g stroke="#c6c6c8" stroke-width="1.400"><path d="M19 13h26M19 26h26M19 39h26"/></g>
      ${["#2f7bea", "#dd4a3e", "#ea9436"].map((c, i) => svg`<circle cx="10" cy=${13 + i * 13} r="4.600" fill="#fff" stroke=${c} stroke-width="1.200"/><circle cx="10" cy=${13 + i * 13} r="3" fill=${c}/>`)}`, badge: "1" },
  { art: svg`${tile("notes", "#ffffff", "#e9e7e2")}<path d="M0 14v-2Q0 0 12 0h28q12 0 12 12v2z" fill="#f8cd4a"/><path d="M1 15.500h50" stroke="#aaa" stroke-dasharray="1.500 1.500"/><path d="M1 26h50M1 37h50" stroke="#d4d2cd" stroke-width="1.200"/>` },
  { art: svg`${tile("music", "#f0637b", "#e43a41")}<path d="M18 39V14l20-5v25" fill="none" stroke="#fff" stroke-width="3"/><path d="M18 13l20-5v7l-20 5z" fill="#fff"/><ellipse cx="14.500" cy="39" rx="5" ry="4.300" fill="#fff"/><ellipse cx="34.500" cy="34.500" rx="5" ry="4.300" fill="#fff"/>` },
  { art: svg`${tile("pod", "#b864ee", "#6c30b4")}<g fill="none" stroke="#fff" stroke-width="2.400"><path d="M16 40a18 18 0 1 1 20 0"/><path d="M18 33a11.500 11.500 0 1 1 16 0"/></g><circle cx="26" cy="23.500" r="4.600" fill="#fff"/><path d="M21.500 33q0-3.500 4.500-3.500t4.500 3.500l-1.500 11q-.6 2.500-3 2.500t-3-2.500z" fill="#fff"/>` },
  { art: svg`${tile("num", "#8df06c", "#52c437")}<g fill="#f8fbf6"><rect x="9" y="34" width="7" height="10" rx="1"/><rect x="18" y="25" width="7" height="19" rx="1"/><rect x="27" y="8" width="7" height="36" rx="1"/><rect x="36" y="17" width="7" height="27" rx="1"/></g>` },
  { art: svg`${tile("key", "#52bdfb", "#2565e8")}<path d="M13 8h26l3 15H10z" fill="#f6f6f6"/><path d="M25 23h2v21h-2z" fill="#e8e8e8"/><rect x="17" y="43" width="18" height="2.600" rx="1.300" fill="#e8e8e8"/><circle cx="26" cy="14" r="4.500" fill="#54a2e8"/><path d="M26 14v-4.500a4.500 4.500 0 0 1 4.500 4.500z" fill="#e6533f"/><path d="M26 14h4.500a4.500 4.500 0 0 1-4.500 4.500z" fill="#f2b33d"/>` },
  { art: svg`${tile("pages", "#f8ae45", "#ee8c35")}<path d="M10 44L14 33 36 11q4-3 6 0 1 2-1 4L20 40z" fill="#fff"/><path d="M10 44l4-11 3 6z" fill="#c9b59c"/><path d="M20 44h24" stroke="#fbdcb4" stroke-width="1.600"/>` },
  { art: svg`${tile("store", "#41b1f4", "#2461dc")}<g stroke="#fff" stroke-width="4.400" stroke-linecap="round"><path d="M28 12L14 36M24 12l14 24M9 31.500h19M37 31.500h6M12 40l1-2M40 40l-1-2"/></g>` },
  { art: svg`${tile("set", "#d5dfe4", "#8f8f8f")}<circle cx="26" cy="26" r="22" fill="#3a3b3c"/><circle cx="26" cy="26" r="20" fill="none" stroke="#8b8c8d" stroke-width="3" stroke-dasharray="2 1.500"/><circle cx="26" cy="26" r="14" fill="#6e7072" stroke="#b0b2b4" stroke-width="2"/><g stroke="#c9cbcc" stroke-width="3"><path d="M26 26h15M26 26l-8 13M26 26l-8-13"/></g><circle cx="26" cy="26" r="4" fill="#303132"/>`, running: true, badge: "2" },
  { art: svg`<rect y="1" width="52" height="51" rx="12" fill="#c8d2d4"/><rect x="1.500" y="2.500" width="49" height="48" rx="11" fill="#0c0c0c"/><rect x="4" y="5" width="44" height="43" rx="8" fill="#232323"/><path d="M8 10l5 4-5 4M16 19h7" fill="none" stroke="#fff" stroke-width="2"/>` },
  { art: svg`<rect width="52" height="52" rx="12" fill="#fff"/><path d="M35 8l8 4v28l-8 4-16-15-8 7-4-3 8-7-8-7 4-3 8 6z" fill="#2b7fc7"/><path d="M35 18v16L24 26z" fill="#fff"/><path d="M35 8l8 4v28l-8 4z" fill="#3a9ae6"/>` },
  { art: svg`<rect width="52" height="52" rx="12" fill="#e7322d"/><text x="26" y="34" text-anchor="middle" font-size="20" font-weight="700" fill="#fff">有道</text>`, running: true },
];

const moreApps: App[] = [
  { art: svg`<rect width="52" height="52" rx="12" fill="#fff"/><path d="M6 13h13l6 14 4-9-2-5h19L35 40h-7l-3-8-4 8h-5z" fill="#dd3d2a"/><path d="M27 13h19l-2 5H34l-6 22h7l-9-14z" fill="#ee7a2c"/><path d="M15 18l5 13 3-6-3-7zM31 18l2 5 3-5z" fill="#fff"/>`, running: true },
  { art: matlab, running: true },
  { art: svg`<rect x="-2" y="-2" width="56" height="56" rx="13" fill="#fff"/><path d="M20 11l14 10" stroke="#ee3f72" stroke-width="14" stroke-linecap="round"/><path d="M34 20L20 32" stroke="#41b4f4" stroke-width="12" stroke-linecap="round"/><path d="M34 21l-6 4" stroke="#e23a7d" stroke-width="13" stroke-linecap="round"/>
      <text x="26" y="49" text-anchor="middle" font-size="12" font-weight="800" fill="#e8327c">YO<tspan fill="#9a3fd0">U</tspan><tspan fill="#3aa5f0">KU</tspan></text>`, running: true },
  { art: mathtype, running: true },
  { art: svg`<rect width="52" height="52" rx="12" fill="#fff"/><circle cx="27" cy="14" r="5.500" fill="#7b83eb"/><circle cx="39" cy="15" r="4" fill="#5059c9"/><path d="M32 21h12v12q0 7-6 7t-6-6z" fill="#5059c9"/><path d="M18 21h18v13q0 9-9 9t-9-9z" fill="#7b83eb"/><rect x="6" y="18" width="20" height="19" rx="2" fill="#4450b5"/><text x="16" y="33" text-anchor="middle" font-size="15" font-weight="700" fill="#fff">T</text>`, running: true },
  { art: svg`<defs><linearGradient id="meet" x1="0" y1="1" x2="1" y2="0"><stop offset="0" stop-color="#1b57f2"/><stop offset="1" stop-color="#4295fb"/></linearGradient></defs><rect width="52" height="52" rx="10" fill="url(#meet)"/><path d="M7 33l9-14q2-3 5 0l4 5-8 12q-1 0-3-1-4-3-7-2z" fill="#fff" opacity=".92"/><path d="M16 35q6-4 10-10l6 10q-8-5-16 0z" fill="#9fc0ff"/><path d="M25 24l3-4q2-3 4 0l5 6-4 9q-4-2-8-11zM32 34l5-14q2-2 4 1l5 12q-6-3-14 1z" fill="#fff"/>`, running: true },
  { art: svg`<rect width="52" height="52" rx="11" fill="#222530"/><path d="M7 12q0-3 3-1l12 7 11-7q4-2 4 1v28q0 3-4 1l-11-7-12 7q-3 2-3-1z" fill="#40b8ef"/><path d="M38 21l6-4q2-1 2 1v16q0 2-2 1l-6-4z" fill="#2f83da"/><path d="M22 18l11-7q4-2 4 1v28q0 3-4 1l-11-7z" fill="#63dceb" opacity=".7"/>`, running: true },
  { art: qq, running: true },
  { art: svg`<path d="M2 0l16 2 14-5 8 5 10 8 6 20-6 20-22 7-24 0L-2 36l4-22z" fill="#3b88f0"/><path d="M2-2l18 4 2 14L0 34z" fill="#f2a03c"/><path d="M-2 34l14-20 10 6L2 56z" fill="#e8417c"/><path d="M10 14L-4 28l10 8z" fill="#9a45d8"/><path d="M36-2l10 12-6 8-10-8z" fill="#58c2f2"/>
      <rect x="8" y="9" width="36" height="36" fill="#0e0b10"/><text x="11" y="28" font-size="19" font-weight="700" fill="#fff" class="mono">IJ</text><path d="M12 39h14" stroke="#fff" stroke-width="2.400"/>`, running: true },
  { art: navicat, running: true },
];

const mini = (art: unknown, x: number, y: number) => svg`<g transform="translate(${x} ${y}) scale(.36)">${art}</g>`;
const lines = (x: number, y: number, n: number, w: number, step: number, color = "#b9b9bd") =>
  svg`<path d=${Array.from({ length: n }, (_, i) => `M${x} ${y + i * step}h${w - ((i * 5) % Math.min(9, w))}`).join("")} stroke=${color} stroke-width="1"/>`;

const windowsInDock: unknown[] = [
  svg`<rect x="-4" y="9" width="60" height="46" fill="#fff"/><rect x="-4" y="9" width="9" height="46" fill="#ececec"/>${lines(-2, 14, 5, 5, 4)}<path d="M30 12v42" stroke="#333" stroke-width="3.500" stroke-dasharray="4 2"/><path d="M30 12v5M30 28v3" stroke="#cf3434" stroke-width="4"/>${mini(photos, 36, 36)}`,
  svg`<rect x="15" y="-4" width="20" height="60" fill="#f3f2f3"/>${lines(17, 0, 14, 16, 4, "#8f8f93")}${mini(finder, 35, 36)}`,
  svg`<rect x="-4" y="-1" width="60" height="54" fill="#f7f7f7"/><circle cx="-2" cy="1" r="1" fill="#e0463a"/><circle cx="1" cy="1" r="1" fill="#f2b33d"/><circle cx="4" cy="1" r="1" fill="#55c050"/>${lines(-2, 4, 2, 56, 3, "#9da3a8")}
    <rect x="3" y="12" width="47" height="37" fill="#fff" stroke="#ccc" stroke-width=".600"/><path d="M5 45L17 14" stroke="#e9a0a0" fill="none"/><path d="M5 42Q10 26 22 26h28" stroke="#f3c592" fill="none"/>${mini(matlab, 36, 35)}`,
  svg`<rect x="-4" y="6" width="60" height="39" fill="#c9ced9"/><rect x="-4" y="6" width="60" height="15" fill="#fff"/><rect x="-4" y="6" width="60" height="5" fill="#e8e2e2"/><path d="M26 13v8" stroke="#555" stroke-dasharray="2 1.500" stroke-width="2"/><path d="M-3 27h26M46 27h9" stroke="#8b93a2" stroke-width="4" stroke-dasharray="4 1"/><path d="M-3 32h15" stroke="#fff" stroke-width="4" stroke-dasharray="4 1"/>${mini(mathtype, 36, 36)}`,
  svg`<rect x="-4" y="4" width="60" height="44" fill="#f8f8f8"/><path d="M-4 6h16" stroke="#5fbf9a" stroke-width="3"/><path d="M-1 11v34" stroke="#c98f6a" stroke-width="3" stroke-dasharray="3 3"/>${lines(3, 12, 7, 9, 5)}<path d="M14 6v40M47 6v40" stroke="#ddd"/>${lines(18, 15, 4, 26, 7, "#9a9aa0")}${lines(49, 12, 8, 6, 4)}${mini(qq, 36, 36)}`,
  svg`<rect x="-4" y="6" width="60" height="39" fill="#fbfbfb"/>${lines(-2, 8, 2, 54, 3, "#c3a36a")}<path d="M7 12v32M44 12v32" stroke="#ddd"/>${lines(-2, 14, 7, 6, 4)}${lines(10, 14, 6, 22, 4, "#c9c9cc")}${lines(46, 16, 4, 8, 4, "#8fb0e0")}${mini(navicat, 35, 35)}`,
  svg`${grad("bin", "#d8d8d6", "#eeeeec")}<path d="M4 8l5 44q.5 4 5 4h24q4.500 0 5-4l5-44z" fill="url(#bin)" stroke="#fafafa" stroke-width="1.400"/><ellipse cx="26" cy="8" rx="22" ry="4.500" fill="#c4c5c4" stroke="#f4f4f4"/>
    <path d="M8 8l6-10 6 5 5-6 4 6 8-4 8 10q-18 5-37 0z" fill="#f4f4f0"/><path d="M13 5l4-4 3 6zM25 6l5-5 5 7zM38 2l3 5-6 1z" fill="#4c5350"/><path d="M20 5l4-5 1 6z" fill="#5b91b5"/><path d="M33 3l3 3-4 2z" fill="#c96a4a"/>`,
];

@customElement("app-dock")
export class AppDock extends LitElement {
  static styles = css`
    :host {
      display: flex;
      box-sizing: border-box;
      height: 86px;
      padding: 0 1px 0 4px;
      border: 2px solid rgba(255, 255, 255, 0.22);
      border-radius: 24px;
      background:
        radial-gradient(ellipse 180px 90px at 58% 60%, rgba(224, 160, 155, 0.6), transparent),
        linear-gradient(90deg, #64799e 0%, #7683a8 14%, #7681a8 24%, #9f9faf 29%, #c1bfc3 35%, #cbc8ca 50%, #cbc8ca 80%, #cfcccb 100%);
      font-family: Inter, "Noto Sans CJK SC", sans-serif;
    }
    .slot {
      flex: 1 1 0;
      min-width: 0;
      display: flex;
      flex-direction: column;
      align-items: center;
      gap: 8px;
      padding: 12px 0 0;
      border: 0;
      background: none;
      font: inherit;
    }
    .slot svg { flex: none; display: block; overflow: visible; filter: drop-shadow(0 1px 1px rgba(0, 0, 0, 0.25)); }
    .dot { width: 8px; height: 8px; border-radius: 50%; background: #474547; }
    .dot.dark { background: #06082a; }
    .divider { flex: none; width: 2px; height: 62px; margin: 10px 15px 0; background: #8b8587; }
    .serif { font-family: "Liberation Serif", serif; }
    .mono { font-family: "Liberation Mono", monospace; }
  `;
  private slotFor(app: App, index = 99) {
    return html`<button class="slot">
      <svg width="52" height="52" viewBox="0 0 52 52" aria-hidden="true">
        ${app.art}
        ${app.badge ? svg`<circle cx="48" cy="6" r="12.500" fill="#e8564b"/><text x="48" y="12" text-anchor="middle" font-size="16" fill="#fff">${app.badge}</text>` : ""}
      </svg>
      ${app.running ? html`<span class=${classMap({ dot: true, dark: index < 10 })}></span>` : ""}
    </button>`;
  }
  render() {
    return html`
      ${apps.map((a, i) => this.slotFor(a, i))}
      <span class="divider"></span>
      ${moreApps.map((a) => this.slotFor(a))}
      <span class="divider"></span>
      ${windowsInDock.map((art) => this.slotFor({ art }))}
    `;
  }
}

/* ------------------------------------------------------------------ */
/* Desktop                                                             */
/* ------------------------------------------------------------------ */

@customElement("app-root")
export class AppRoot extends LitElement {
  static styles = css`
    :host {
      display: flex;
      flex-direction: column;
      min-height: 100vh;
      overflow: hidden;
      background: #1d4069;
    }
    .window {
      flex: 1;
      display: flex;
      flex-direction: column;
      position: relative;
      overflow: hidden;
      border-radius: 0 20px 20px 0;
    }
    .window::after {
      content: "";
      position: absolute;
      inset: auto 0 0 0;
      height: 90px;
      background: linear-gradient(rgba(0, 0, 0, 0), rgba(0, 0, 0, 0.03) 50%, rgba(0, 0, 0, 0.12));
      pointer-events: none;
    }
    warehouse-page { flex: 1; }
    .desktop {
      position: relative;
      height: 100px;
      overflow: hidden;
      background: linear-gradient(100deg, #101c30 0, #1a3557 120px, #23406b 500px);
      font-family: "Liberation Sans", "Noto Sans CJK SC", sans-serif;
      font-size: 24px;
      line-height: 24px;
    }
    .behind { position: absolute; white-space: nowrap; }
    .edge { left: 218px; right: 0; top: 0; height: 4px; background: #858783; }
    .sheet { left: 840px; right: 0; top: 4px; bottom: 0; background: #e6e4e4; }
    .side { left: 2780px; right: 0; top: 0; bottom: 0; background: linear-gradient(#8f908f, #e9e9e9 60px); }
    .word { top: 72px; color: #8b8889; }
    .strong { color: #333; }
    .box { top: 60px; bottom: 0; background: #dcdfe1; }
    .red { background: #d2503f; }
    .pill { top: 72px; width: 45px; height: 24px; border-radius: 12px; background: #5c5d63; }
    .pill.off { background: #c4c2c3; }
    .stripe { left: 2566px; width: 14px; top: 0; bottom: 0; background: #cdb95c; border: solid #4b6c8d; border-width: 0 2px; }
    .figures { left: 2820px; top: -15px; color: #0c0c0c; font-size: 28px; line-height: 34px; }
    .figures i { color: #1c5688; }
    .speaker { top: 64px; }
    app-dock { position: relative; margin: 4px 52px 0 51px; }
  `;
  private speaker(x: number) {
    return html`<svg class="behind speaker" style="left:${x}px" width="36" height="36" viewBox="0 0 36 36" fill="none" stroke="#cf4c3d" stroke-width="3" aria-hidden="true"><path d="M2 12h8L20 4v30L10 24H2zM26 26q6-8 0-18M31 30q3-4 3-8"/></svg>`;
  }
  render() {
    return html`
      <menu-bar></menu-bar>
      <div class="window">
        <browser-chrome></browser-chrome>
        <warehouse-page></warehouse-page>
      </div>
      <div class="desktop">
        <div class="behind edge"></div>
        <div class="behind sheet"></div>
        <div class="behind side"></div>
        <div class="behind pill" style="left:890px"></div>
        <div class="behind word" style="left:944px">划词</div>
        ${this.speaker(1124)}
        <div class="behind pill off" style="left:1326px"></div>
        <div class="behind word" style="left:1380px">重点词汇</div>
        <div class="behind box" style="left:1501px;width:110px"></div>
        <div class="behind word strong" style="left:1531px">清空</div>
        <div class="behind box red" style="left:1628px;width:112px"></div>
        <div class="behind word" style="left:1660px;color:#f3d6d2">翻译</div>
        ${this.speaker(1818)}
        <div class="behind pill off" style="left:2140px"></div>
        <div class="behind word" style="left:2194px">逐句对照</div>
        <div class="behind box" style="left:2314px;width:120px"></div>
        <div class="behind word strong" style="left:2326px">人工翻译</div>
        <div class="behind stripe"></div>
        <div class="behind figures">0.020<br /><i>1x30</i><br />0.500<br /><i>1x30</i></div>
        <app-dock></app-dock>
      </div>
    `;
  }
}
